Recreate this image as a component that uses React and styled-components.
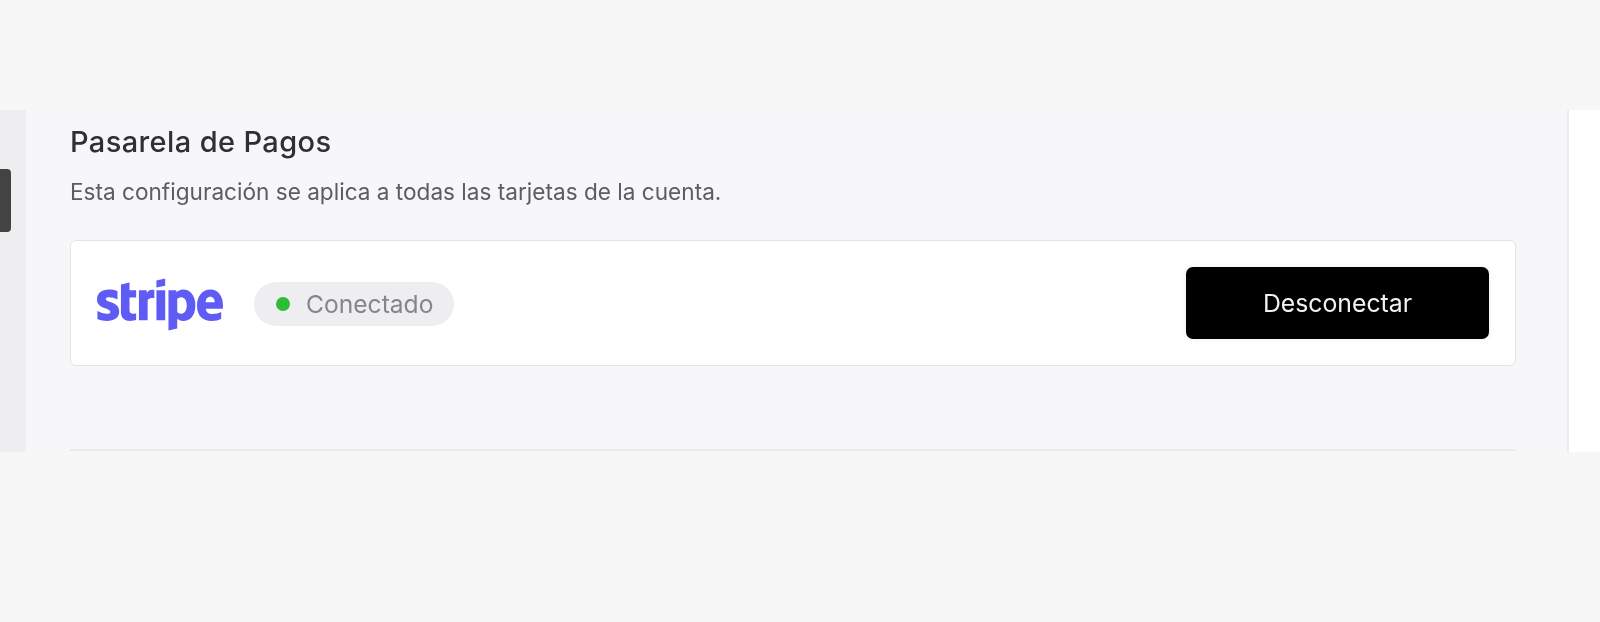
import React from "react";
import styled, { createGlobalStyle } from "styled-components";
import { FaStripe } from "react-icons/fa";

const Global = createGlobalStyle`
  html, body { margin: 0; padding: 0; background: #f7f7f8; height: 100%; overflow: hidden; }
  * { box-sizing: border-box; }
`;

const Page = styled.div`
  height: 622px;
  padding-top: 110px;
  font-family: Inter, "Noto Sans", sans-serif;
  filter: blur(0.5px);
`;

const Frame = styled.div`
  display: flex;
  height: 342px;
  background: #f7f7f9;
`;

const Rail = styled.aside`
  width: 26px;
  flex: none;
  background: #eeeef0;
  padding-top: 59px;
`;

const RailHandle = styled.div`
  width: 11px;
  height: 63px;
  background: #434343;
  border-radius: 0 4px 4px 0;
`;

const Content = styled.main`
  flex: none;
  width: 1490px;
  padding-left: 44px;
  display: flex;
  flex-direction: column;
`;

const Title = styled.h2`
  margin: 14px 0 0;
  font-size: 29px;
  line-height: 36px;
  font-weight: 550;
  color: #2f3032;
  letter-spacing: 0.38px;
`;

const Subtitle = styled.p`
  margin: 18px 0 0;
  font-size: 22.6px;
  line-height: 28px;
  font-weight: 400;
  color: #5c5d61;
`;

const Card = styled.section`
  margin-top: 34px;
  height: 126px;
  background: #ffffff;
  border: 1.5px solid #e4e4e7;
  border-radius: 6px;
  display: flex;
  align-items: center;
  padding: 0 26px 0 26px;
`;

const Logo = styled(FaStripe)`
  width: 126px;
  height: 101px;
  color: #5f5cf6;
  flex: none;
  margin-top: 2px;
`;

const Badge = styled.div`
  margin: 2px 0 0 31px;
  width: 200px;
  height: 44px;
  border-radius: 22px;
  background: #eeeef0;
  display: flex;
  align-items: center;
  padding-left: 22px;
  gap: 16px;
`;

const Dot = styled.span`
  width: 14px;
  height: 14px;
  border-radius: 50%;
  background: #2dbe38;
  flex: none;
`;

const BadgeText = styled.span`
  font-size: 24.6px;
  color: #85858f;
`;

const DisconnectButton = styled.button`
  margin: 0 0 0 auto;
  width: 303px;
  height: 72px;
  border: none;
  border-radius: 7px;
  background: #000000;
  color: #f1f1f1;
  font-family: inherit;
  font-size: 24.8px;
  font-weight: 400;
  box-shadow: 0 0 6px rgba(0, 0, 0, 0.08);
`;

const Divider = styled.hr`
  margin: 83px 0 0;
  width: 100%;
  height: 2px;
  border: none;
  background: #ebebed;
`;

const SidePanel = styled.aside`
  flex: 1;
  margin-left: 51px;
  background: #ffffff;
  border-left: 2px solid #ececee;
`;

export default function App() {
  return (
    <>
      <Global />
      <Page>
        <Frame>
          <Rail>
            <RailHandle />
          </Rail>
          <Content>
            <Title>Pasarela de Pagos</Title>
            <Subtitle>Esta configuración se aplica a todas las tarjetas de la cuenta.</Subtitle>
            <Card>
              <Logo />
              <Badge>
                <Dot />
                <BadgeText>Conectado</BadgeText>
              </Badge>
              <DisconnectButton>Desconectar</DisconnectButton>
            </Card>
            <Divider />
          </Content>
          <SidePanel />
        </Frame>
      </Page>
    </>
  );
}
